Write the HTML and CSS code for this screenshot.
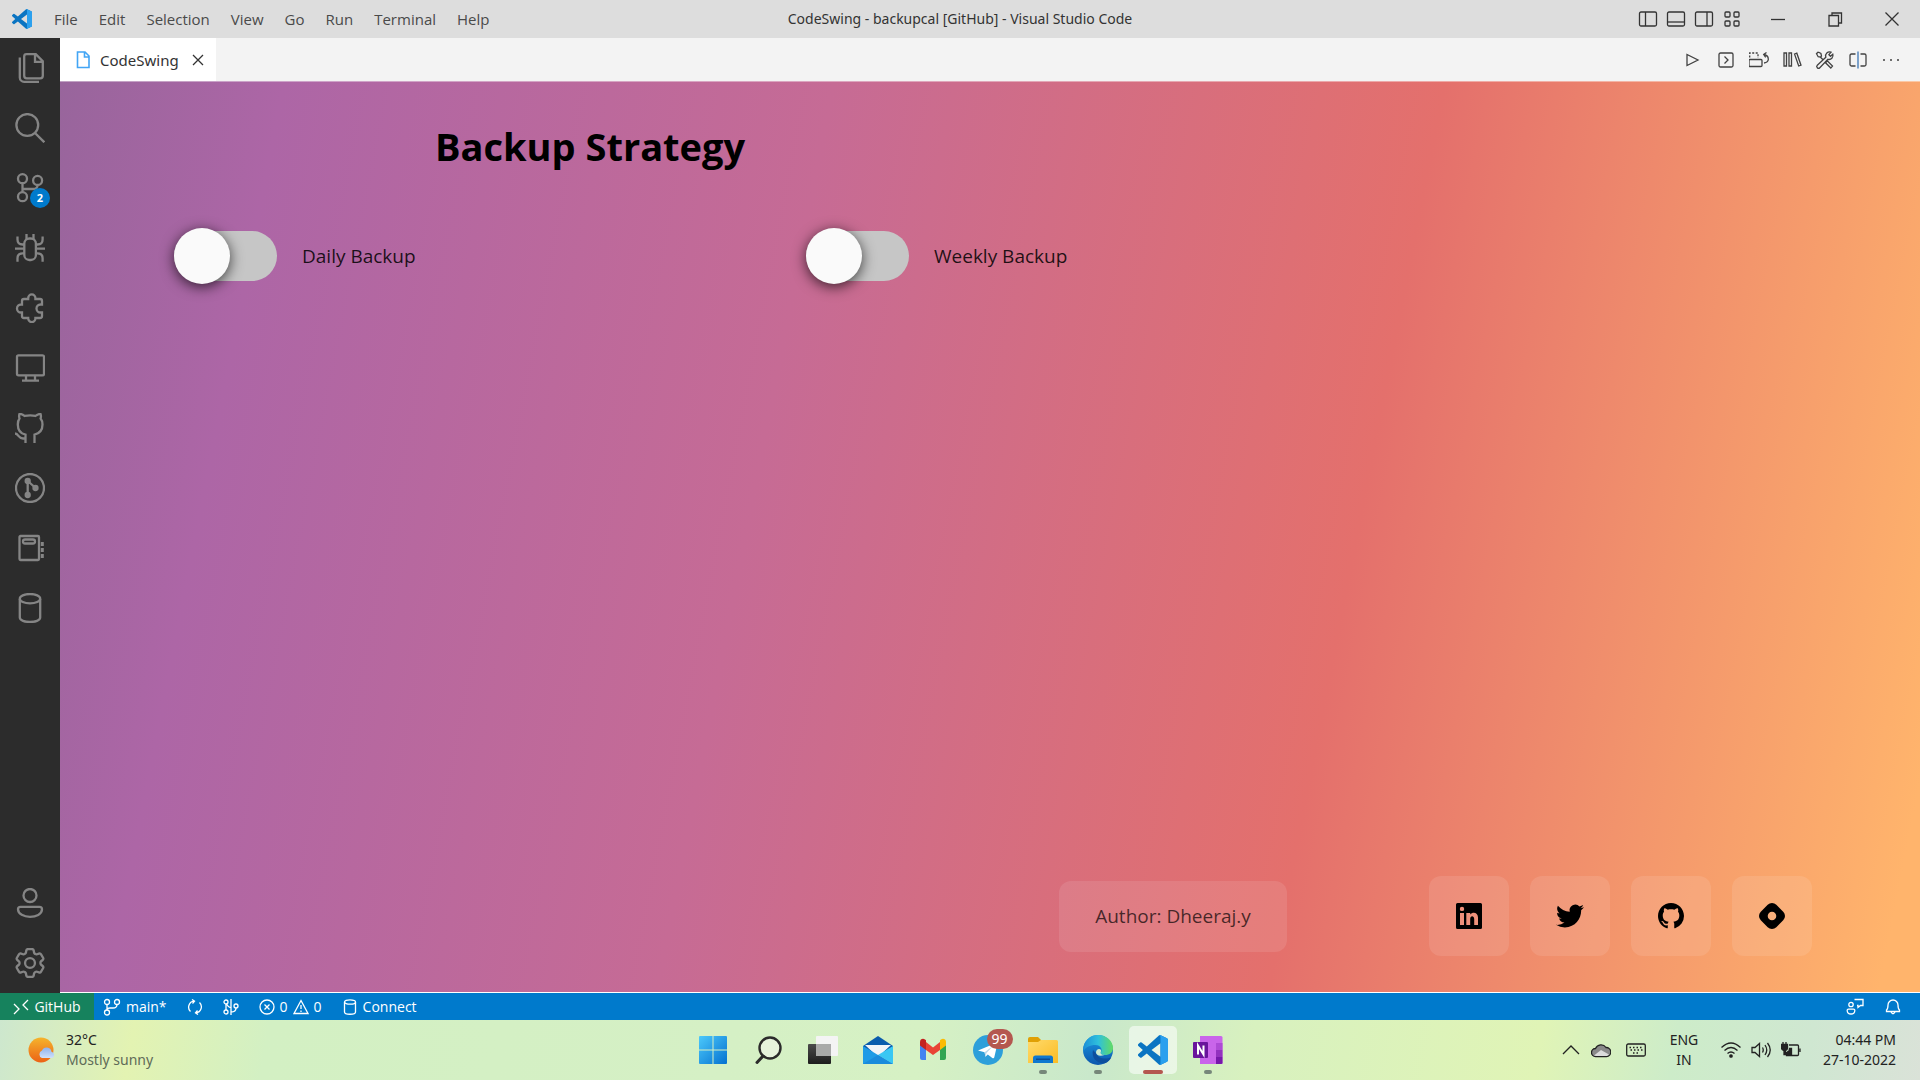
FILE: index.html
```html
<!DOCTYPE html>
<html lang="en">
<head>
<meta charset="utf-8">
<title>CodeSwing - backupcal [GitHub] - Visual Studio Code</title>
<link rel="stylesheet" href="styles.css">
</head>
<body>
<svg class="defs" aria-hidden="true">
  <defs>
    <linearGradient id="g-win" x1="0" y1="0" x2="1" y2="1"><stop offset="0" stop-color="#4cc9fb"/><stop offset="1" stop-color="#0471d0"/></linearGradient>
    <linearGradient id="g-dark" x1="0" y1="0" x2="0" y2="1"><stop offset="0" stop-color="#4b4b4b"/><stop offset="1" stop-color="#1d1d1d"/></linearGradient>
    <linearGradient id="g-edge" x1="0" y1="0" x2="1" y2="0"><stop offset="0" stop-color="#1b8fd8"/><stop offset=".5" stop-color="#2fc0dc"/><stop offset="1" stop-color="#63dc62"/></linearGradient>
    <linearGradient id="g-edge2" x1="0" y1="0" x2="0" y2="1"><stop offset="0" stop-color="#1d9be3"/><stop offset="1" stop-color="#0b56ad"/></linearGradient>
    <linearGradient id="g-sun" x1="0" y1="0" x2="0" y2="1"><stop offset="0" stop-color="#f5b42c"/><stop offset="1" stop-color="#ec6215"/></linearGradient>
    <linearGradient id="g-cloud" x1="0" y1="0" x2="0" y2="1"><stop offset="0" stop-color="#8fb2ee"/><stop offset="1" stop-color="#cfe0fb"/></linearGradient>
    <linearGradient id="g-folder" x1="0" y1="0" x2="1" y2="1"><stop offset="0" stop-color="#ffda6b"/><stop offset="1" stop-color="#fbbc24"/></linearGradient>
    <symbol id="vscode" viewBox="0 0 24 24">
      <path fill="#0a74c2" fill-rule="evenodd" d="M23.15 2.587L18.21.21a1.494 1.494 0 0 0-1.705.29l-9.46 8.63-4.12-3.128a.999.999 0 0 0-1.276.057L.327 7.261A1 1 0 0 0 .326 8.74L3.899 12 .326 15.26a1 1 0 0 0 .001 1.479L1.65 17.94a.999.999 0 0 0 1.276.057l4.12-3.128 9.46 8.63a1.492 1.492 0 0 0 1.704.29l4.942-2.377A1.5 1.5 0 0 0 24 20.06V3.939a1.5 1.5 0 0 0-.85-1.352zm-5.146 14.861L10.826 12l7.178-5.448v10.896z"/>
      <path fill="#2ba0ee" d="M18 .15l5.15 2.437A1.5 1.5 0 0 1 24 3.94v16.12a1.5 1.5 0 0 1-.85 1.352L18.2 23.79q-1 .3-1.7-.29 1.5.5 1.5-1.2V1.7q0-1.600-1.500-1.200.7-.6 1.500-.35z"/>
    </symbol>
  </defs>
</svg>

<header class="titlebar">
  <div class="title-left">
    <svg class="app-logo" viewBox="0 0 24 24"><use href="#vscode"/></svg>
    <nav class="menu">
      <button>File</button><button>Edit</button><button>Selection</button><button>View</button><button>Go</button><button>Run</button><button>Terminal</button><button>Help</button>
    </nav>
  </div>
  <div class="window-title">CodeSwing - backupcal [GitHub] - Visual Studio Code</div>
  <div class="title-right">
    <div class="layout-controls">
      <button aria-label="Toggle primary side bar"><svg class="i20" viewBox="0 0 20 20"><rect x="1.500" y="3" width="17" height="14" rx="1.500"/><path d="M7.500 3v14"/></svg></button>
      <button aria-label="Toggle panel"><svg class="i20" viewBox="0 0 20 20"><rect x="1.500" y="3" width="17" height="14" rx="1.500"/><path d="M1.500 13h17"/></svg></button>
      <button aria-label="Toggle secondary side bar"><svg class="i20" viewBox="0 0 20 20"><rect x="1.500" y="3" width="17" height="14" rx="1.500"/><path d="M13 3v14"/></svg></button>
      <button aria-label="Customize layout"><svg class="i20" viewBox="0 0 20 20"><rect x="3" y="3" width="5" height="5" rx="1"/><rect x="12" y="3" width="5" height="5" rx="1"/><rect x="3" y="12" width="5" height="5" rx="1"/><rect x="12" y="12" width="5" height="5" rx="1"/></svg></button>
    </div>
    <div class="window-controls">
      <button aria-label="Minimize"><svg class="i20" viewBox="0 0 20 20"><path d="M3 10.500h14"/></svg></button>
      <button aria-label="Restore"><svg class="i20" viewBox="0 0 20 20"><path d="M4 6.500h9.500V17H4zM7 6V4h9.500v10H14"/></svg></button>
      <button aria-label="Close"><svg class="i20" viewBox="0 0 20 20"><path d="M3.500 3.500l13 13M16.500 3.500l-13 13"/></svg></button>
    </div>
  </div>
</header>

<div class="workbench">
  <aside class="activity">
    <nav class="activity-group">
      <button aria-label="Explorer"><svg viewBox="0 0 30 30"><path d="M11.500 1.200h9.300l7 7v14.600a2.500 2.500 0 0 1-2.500 2.500H11.700A2.500 2.500 0 0 1 9.200 22.800V3.500a2.300 2.300 0 0 1 2.300-2.300zM20 1.500v7.300h7.500M4.800 4.500v20a4.300 4.300 0 0 0 4.300 4.300H24"/></svg></button>
      <button aria-label="Search"><svg viewBox="0 0 30 30"><circle cx="12.300" cy="12" r="10.900"/><path d="M20 20l9.300 9.300"/></svg></button>
      <button aria-label="Source Control"><svg viewBox="0 0 30 30"><circle cx="7.500" cy="5.700" r="4.500"/><circle cx="22.600" cy="7.400" r="4.500"/><circle cx="7.500" cy="23.700" r="4.500"/><path d="M7.500 10.200v9M22.600 12q0 4-4.500 4H7.500"/></svg><span class="badge">2</span></button>
      <button aria-label="Run and Debug"><svg viewBox="0 0 30 30"><rect x="9.300" y="5.500" width="11.600" height="21.500" rx="5"/><path d="M11.500 6V1M18.500 6V1M9.300 11.500H7.500q-5 0-5-5V3.500M20.900 11.500h1.700q5 0 5-5V3.500M0 15.700h9.500M20.500 15.700H30M9.300 20.300H7.500q-5 0-5 5v3.500M20.900 20.300h1.700q5 0 5 5v3.500"/></svg></button>
      <button aria-label="Extensions"><svg viewBox="0 0 30 30"><path d="M9 6h4.200V5a3.600 3.600 0 0 1 7.200 0v1H25q2 0 2 2v3.500h-1.500a4 4 0 0 0 0 8H27V23q0 2-2 2h-4.600v.5a3.600 3.600 0 0 1-7.200 0V25H9q-2 0-2-2v-3.500H6a4 4 0 0 1 0-8h1V8q0-2 2-2z"/></svg></button>
      <button aria-label="Remote Explorer"><svg viewBox="0 0 30 30"><rect x="2" y="2.300" width="27" height="20" rx="1.500"/><path d="M11 22.500v5M20 22.500v5M7 27.600h17"/></svg></button>
      <button aria-label="GitHub"><svg viewBox="0 0 30 30"><path d="M10.500 30v-8.300C5.500 20.500 2.800 17 2.800 11.500c0-2.500.5-4.500 1.700-6-.5-1.500-.5-3.200 0-4.600 2.200 0 3.800 1 5 2 3.500-.7 8-.7 11 0 1.500-1 3-2 5-2 .6 1.500.6 3 .1 4.600 1.200 1.500 1.900 3.500 1.900 6 0 5.500-3 9-8 10.200V30M0 20.500c4 .5 3 5 8 5h2"/></svg></button>
      <button aria-label="GitLens"><svg viewBox="0 0 30 30"><circle cx="15" cy="15" r="14"/><path d="M12.700 8v14M12.700 8l8 7"/><g class="solid"><circle cx="12.700" cy="8" r="2"/><circle cx="12.700" cy="22" r="2"/><circle cx="20.500" cy="15" r="2"/></g></svg></button>
      <button aria-label="Notebooks"><svg viewBox="0 0 30 30"><rect x="4.500" y="3" width="19.500" height="24" rx="1"/><rect x="8" y="6.500" width="12" height="4" rx="2"/><path class="tick" d="M27.300 9v17" stroke-dasharray="4 2"/></svg></button>
      <button aria-label="Databases"><svg viewBox="0 0 30 30"><ellipse cx="15" cy="5.700" rx="10.200" ry="4.700"/><path d="M4.800 6v18.500c0 6 20.400 6 20.400 0V6"/></svg></button>
    </nav>
    <nav class="activity-group">
      <button aria-label="Accounts"><svg viewBox="0 0 30 30"><circle cx="15" cy="7.500" r="6.500"/><path d="M5.500 18.800h19q2.500 0 2.500 2.500c0 5-6 7.500-12 7.500S3 26 3 21.300q0-2.500 2.500-2.500z"/></svg></button>
      <button aria-label="Manage"><svg class="gear" viewBox="2.300 2.300 19.400 19.400"><path d="M9.594 3.940c.09-.542.56-.94 1.110-.94h2.593c.55 0 1.020.398 1.110.94l.213 1.281c.063.374.313.686.645.87.074.04.147.083.22.127.325.196.72.257 1.075.124l1.217-.456a1.125 1.125 0 0 1 1.370.49l1.296 2.247a1.125 1.125 0 0 1-.26 1.431l-1.003.827c-.293.241-.438.613-.43.992a7.723 7.723 0 0 1 0 .255c-.008.378.137.75.43.991l1.004.827c.424.35.534.955.26 1.430l-1.298 2.247a1.125 1.125 0 0 1-1.369.491l-1.217-.456c-.355-.133-.75-.072-1.076.124a6.470 6.470 0 0 1-.22.128c-.331.183-.581.495-.644.869l-.213 1.281c-.09.543-.56.94-1.110.94h-2.594c-.55 0-1.019-.398-1.110-.94l-.213-1.281c-.062-.374-.312-.686-.644-.87a6.520 6.520 0 0 1-.22-.127c-.325-.196-.72-.257-1.076-.124l-1.217.456a1.125 1.125 0 0 1-1.369-.49l-1.297-2.247a1.125 1.125 0 0 1 .26-1.431l1.004-.827c.292-.24.437-.613.43-.991a6.932 6.932 0 0 1 0-.255c.007-.38-.138-.751-.43-.992l-1.004-.827a1.125 1.125 0 0 1-.26-1.430l1.297-2.247a1.125 1.125 0 0 1 1.370-.491l1.216.456c.356.133.751.072 1.076-.124.072-.044.146-.086.22-.128.332-.183.582-.495.644-.869l.214-1.280Z"/><circle cx="12" cy="12" r="3.200"/></svg></button>
    </nav>
  </aside>

  <main class="editor">
    <div class="tabbar">
      <div class="tab">
        <svg class="tab-file" viewBox="0 0 14 18"><path d="M1.500 1h7.500l4 4v11.500H1.500zM8.500 1v5H13"/></svg>
        <span class="tab-name">CodeSwing</span>
        <button class="tab-close" aria-label="Close tab"><svg viewBox="0 0 12 12"><path d="M1 1l10 10M11 1L1 11"/></svg></button>
      </div>
      <div class="actions">
        <button aria-label="Run"><svg class="i20" viewBox="0 0 20 20"><path d="M4 4.500v11L15 10z"/></svg></button>
        <button aria-label="Open console"><svg class="i20" viewBox="0 0 20 20"><rect x="3" y="3" width="14" height="14" rx="1.500"/><path d="M8.500 6.500L12 10l-3.500 3.500"/></svg></button>
        <button aria-label="Change layout"><svg class="i20" viewBox="0 0 20 20"><rect x="0" y="9.500" width="13" height="7" rx="1"/><path stroke-dasharray="2 1.500" d="M.7 7.500V3H9v5"/><path d="M15 4.500q4.500 1 4.300 5-.3 3-4.300 3.500M17.500 2.500l-2.800 2 2 2.800"/></svg></button>
        <button aria-label="Add library"><svg class="i20" viewBox="0 0 20 20"><path d="M2 3h2.500v13H2zM7 3h2.500v13H7zM12.500 4l2.300-.8 4.200 12-2.300.8z"/></svg></button>
        <button aria-label="Settings tools"><svg class="i20" viewBox="0 0 20 20"><path d="M3.200 2L1.500 3.700l1.700 3 2.300.5 3 3M5.500 7.200L6.500 6l-.6-2.500L3.200 2M11.500 11.500l1-.5 5 5-1.700 2-5-5zM17.800 4.200l-2.300 2.100-1.600-1.600L16 2.200a4 4 0 0 0-5.200 5L2.300 15.200a1.700 1.700 0 0 0 2.500 2.500l8.100-8.400a4 4 0 0 0 4.900-5.100z"/></svg></button>
        <button aria-label="Split editor"><svg class="i20" viewBox="0 0 20 20"><path d="M7.500 4H3.500Q2 4 2 5.500v9Q2 16 3.500 16h4M12.500 4h4Q18 4 18 5.500v9q0 1.500-1.500 1.500h-4"/><path class="blue" d="M10 1.500v17"/></svg></button>
        <button aria-label="More actions"><svg class="i20 dots" viewBox="0 0 20 20"><circle cx="3" cy="10" r="1"/><circle cx="10" cy="10" r="1"/><circle cx="17" cy="10" r="1"/></svg></button>
      </div>
    </div>

    <section class="preview">
      <h1>Backup Strategy</h1>
      <form class="switches">
        <label class="switch"><input type="checkbox"><span>Daily Backup</span></label>
        <label class="switch"><input type="checkbox"><span>Weekly Backup</span></label>
      </form>
      <footer class="credits">
        <p class="author">Author: Dheeraj.y</p>
        <div class="social">
          <a href="#linkedin" aria-label="LinkedIn"><svg viewBox="0 0 26 26"><path fill-rule="evenodd" d="M1.500 0h23A1.500 1.500 0 0 1 26 1.500v23a1.500 1.500 0 0 1-1.500 1.500h-23A1.500 1.500 0 0 1 0 24.500v-23A1.500 1.500 0 0 1 1.500 0zM4 10v12h4V10zM6 3.700a2.200 2.200 0 1 0 0 4.400 2.200 2.200 0 0 0 0-4.400zM10.300 10v12h3.900v-6c0-3.800 4-3.600 4 0v6H22v-7.400c0-5.600-5.600-6-7.800-3V10z"/></svg></a>
          <a href="#twitter" aria-label="Twitter"><svg class="wide" viewBox="0 0 24 24"><path d="M23.953 4.570a10 10 0 01-2.825.775 4.958 4.958 0 002.163-2.723c-.951.555-2.005.959-3.127 1.184a4.920 4.920 0 00-8.384 4.482C7.690 8.095 4.067 6.130 1.640 3.162a4.822 4.822 0 00-.666 2.475c0 1.710.87 3.213 2.188 4.096a4.904 4.904 0 01-2.228-.616v.06a4.923 4.923 0 003.946 4.827 4.996 4.996 0 01-2.212.085 4.936 4.936 0 004.604 3.417 9.867 9.867 0 01-6.102 2.105c-.39 0-.779-.023-1.170-.067a13.995 13.995 0 007.557 2.209c9.053 0 13.998-7.496 13.998-13.985 0-.21 0-.42-.015-.63A9.935 9.935 0 0024 4.590z"/></svg></a>
          <a href="#github" aria-label="GitHub profile"><svg viewBox="0 0 16 16"><path d="M8 0C3.580 0 0 3.580 0 8c0 3.540 2.290 6.530 5.470 7.590.4.070.55-.17.55-.38 0-.19-.01-.82-.01-1.490-2.010.37-2.530-.49-2.690-.94-.09-.23-.48-.94-.82-1.130-.28-.15-.68-.52-.01-.53.63-.01 1.080.58 1.230.82.72 1.210 1.870.87 2.330.66.07-.52.28-.87.51-1.070-1.780-.2-3.640-.89-3.640-3.950 0-.87.31-1.590.82-2.150-.08-.2-.36-1.020.08-2.120 0 0 .67-.21 2.200.82.64-.18 1.320-.27 2-.27s1.360.09 2 .27c1.530-1.040 2.200-.82 2.200-.82.44 1.100.16 1.920.08 2.120.51.56.82 1.270.82 2.150 0 3.070-1.870 3.750-3.650 3.950.29.25.54.73.54 1.480 0 1.070-.01 1.930-.01 2.200 0 .21.15.46.55.38A8.010 8.010 0 0016 8c0-4.420-3.580-8-8-8z"/></svg></a>
          <a href="#hashnode" aria-label="Hashnode"><svg viewBox="0 0 24 24"><path fill-rule="evenodd" d="M22.351 8.019l-6.370-6.370a5.630 5.630 0 0 0-7.962 0l-6.370 6.370a5.630 5.630 0 0 0 0 7.962l6.370 6.370a5.630 5.630 0 0 0 7.962 0l6.370-6.370a5.630 5.630 0 0 0 0-7.962zM12 15.953a3.953 3.953 0 1 1 0-7.906 3.953 3.953 0 0 1 0 7.906z"/></svg></a>
        </div>
      </footer>
    </section>
  </main>
</div>

<div class="statusbar">
  <div class="status-left">
    <button class="remote"><svg class="i16" viewBox="0 0 16 16"><path d="M1 5l5 5-5 5M15 1l-5 5 5 5"/></svg>GitHub</button>
    <button><svg class="i18" viewBox="0 0 18 18"><circle cx="4" cy="4" r="2.500"/><circle cx="4" cy="14.500" r="2.500"/><circle cx="14" cy="4" r="2.500"/><path d="M4 6.500V12M14 6.500q0 3.500-4 3.500H7q-3 0-3 2"/></svg>main*</button>
    <button aria-label="Synchronize"><svg class="i16" viewBox="0 0 16 16"><path d="M3.500 12.500A6 6 0 0 1 7 2.200M12.500 3.500A6 6 0 0 1 9 13.800M5 .5l2.500 1.700L5.500 4.500M11 15.500l-2.500-1.700 2-2.300"/></svg></button>
    <button aria-label="Commit graph"><svg class="i16" viewBox="0 0 16 16"><circle cx="3" cy="3" r="2"/><circle cx="3" cy="13" r="2"/><circle cx="13" cy="7" r="2"/><path d="M3 5v6M8 0v16M8 13q5 0 5-4M3.500 5Q5 8 8 9"/></svg></button>
    <button><svg class="i16" viewBox="0 0 16 16"><circle cx="8" cy="8" r="7"/><path d="M5.500 5.500l5 5M10.500 5.500l-5 5"/></svg>0<svg class="i16" viewBox="0 0 16 16"><path d="M8 1.500L15 14.500H1zM8 6v4M8 11.500v1.500"/></svg>0</button>
    <button><svg class="i16" viewBox="0 0 16 16"><ellipse cx="8" cy="3" rx="5.500" ry="2.200"/><path d="M2.500 3v10c0 3 11 3 11 0V3"/></svg>Connect</button>
  </div>
  <div class="status-right">
    <button aria-label="Feedback"><svg class="i18" viewBox="0 0 18 18"><circle cx="5" cy="6.500" r="2.200"/><path d="M2.500 11.200h5q1.500 0 1.300 1.500-.3 3.300-3.800 3.300t-3.800-3.300q-.2-1.500 1.300-1.500zM8.500 1.500h8.500v6h-2.500L12 9.500v-2h-1"/></svg></button>
    <button aria-label="Notifications"><svg class="i18" viewBox="0 0 18 18"><path d="M2.500 13.500V12q1.500-1 1.500-5a5 5 0 0 1 10 0q0 4 1.500 5v1.500zM7 14q2 3.500 4 0"/></svg></button>
  </div>
</div>

<footer class="taskbar">
  <button class="weather">
    <svg viewBox="0 0 30 28"><circle cx="13" cy="14" r="12.500" fill="url(#g-sun)"/><path fill="url(#g-cloud)" d="M14 22a4 4 0 0 1 0-7.500 5 5 0 0 1 9.500 1.200A3.300 3.300 0 0 1 24 22z"/></svg>
    <span class="weather-text"><span>32°C</span><span class="muted">Mostly sunny</span></span>
  </button>
  <nav class="apps">
    <button aria-label="Start"><svg viewBox="0 0 30 30"><path fill="url(#g-win)" d="M1 2a1 1 0 0 1 1-1h12.500v13.500H1zM15.500 1H28a1 1 0 0 1 1 1v12.500H15.500zM1 15.500h13.500V29H2a1 1 0 0 1-1-1zM15.500 15.500H29V28a1 1 0 0 1-1 1H15.500z"/></svg></button>
    <button aria-label="Search"><svg viewBox="0 0 30 30"><circle cx="17" cy="13" r="10.500" fill="#e6f3dc" stroke="#2b2b2b" stroke-width="2.400"/><path d="M10 21l-6 6.500" stroke="#2b2b2b" stroke-width="3" stroke-linecap="round"/></svg></button>
    <button aria-label="Task view"><svg viewBox="0 0 30 30"><rect x="0" y="9" width="23" height="20" rx="1" fill="url(#g-dark)"/><rect x="8" y="1" width="22" height="20" rx="1" fill="#f4f4f4"/><rect x="8" y="9" width="15" height="12" fill="#a9aaa9"/></svg></button>
    <button aria-label="Mail"><svg viewBox="0 0 30 30"><path fill="#0a5cad" d="M0 11L15 1l15 10v6H0z"/><path fill="#f2f4f8" d="M2 10h26L15 22z"/><path fill="#1f9be6" d="M0 11l15 9 15 9H0z"/><path fill="#39c7f3" d="M30 11v18L15 20z"/><path fill="#1a8bdc" d="M0 29l15-9 15 9z"/></svg></button>
    <button aria-label="Gmail"><svg viewBox="0 0 30 30"><path fill="#4284f0" d="M2 9l6 4v12H4a2 2 0 0 1-2-2z"/><path fill="#33a553" d="M28 9l-6 4v12h4a2 2 0 0 0 2-2z"/><path fill="#e94335" d="M8 7l7 5.500L22 7v8l-7 5-7-5z"/><path fill="#c3221f" d="M2 9V7c0-3 3-4 5-2.500L8 5.300V15l-6-4.500z"/><path fill="#fbbb04" d="M28 9V7c0-3-3-4-5-2.500l-1 .8V15l6-4.500z"/></svg></button>
    <button aria-label="Telegram"><svg viewBox="0 0 30 30"><circle cx="15" cy="15" r="15" fill="#2d9fda"/><path fill="#fff" d="M5 15.500L23 8c1-.3 1.500.2 1.300 1.300l-3 13c-.3 1-1 1.200-2 .6l-4.500-3.300-2.400 2.200-.8-4.600z"/><path fill="#b9d8ea" d="M11.600 17.200L20 11l-6.500 7-.9 4z"/></svg><span class="count">99</span></button>
    <button class="open" aria-label="File Explorer"><svg viewBox="0 0 30 30"><path fill="#e0a005" d="M0 4q0-2 2-2h8l3 3v4H0z"/><path fill="url(#g-folder)" d="M0 7h10l3-2h15.500Q30 5 30 6.500V28H0z"/><path fill="#0f78cf" d="M5 28v-5q0-2.500 2.500-2.500h15Q25 20.500 25 23v5z"/><path fill="#0a4c93" d="M8 23.500h14v1.500H8z"/></svg></button>
    <button class="open" aria-label="Edge"><svg viewBox="0 0 30 30"><circle cx="15" cy="15" r="15" fill="url(#g-edge2)"/><path fill="url(#g-edge)" d="M.5 12C2 4.500 8 0 15 0c9 0 15 6.500 15 13 0 4.500-3.500 7-8 7-3.500 0-5-1.500-4-3 1.500-2.200 0-7-5.500-7C7 10 1.500 12.500.5 17z"/><path fill="#0d4f9e" d="M10 15c-2 8 4 14 12 13.200 3-1 5.500-3.500 6.300-6-4 2.300-13 2.300-15-3.700z"/><path fill="#cdebd0" d="M13 17.500c0-2 1.500-3.500 3-3.500 2 0 2.500 1.800 1.800 3-.8 1.500.5 3 3.700 3-4.500 1.500-8.500.5-8.500-2.500z"/></svg></button>
    <button class="open active" aria-label="Visual Studio Code"><svg viewBox="0 0 24 24"><use href="#vscode"/></svg></button>
    <button class="open" aria-label="OneNote"><svg viewBox="0 0 30 30"><path fill="#c965ea" d="M7 1h21q1.500 0 1.500 1.500V29H7z"/><path fill="#ae4bd5" d="M23 8h6.500v7H23z"/><path fill="#9332bf" d="M23 15h6.500v7H23z"/><path fill="#7719aa" d="M23 22h6.500v5.500q0 1.500-1.500 1.500h-5z"/><rect x="0" y="7" width="15" height="16" rx="1" fill="#6a149c"/><path fill="none" stroke="#fff" stroke-width="2" d="M5 19.500v-9l5.500 9v-9"/></svg></button>
  </nav>
  <div class="tray">
    <button aria-label="Hidden icons"><svg class="i20" viewBox="0 0 20 20"><path d="M2 14l8-8 8 8"/></svg></button>
    <button aria-label="OneDrive"><svg class="i20" viewBox="0 0 20 20"><path fill="#8a8a8a" d="M4.500 16.500a4 4 0 0 1 0-8A6 6 0 0 1 15 7.500a4.500 4.500 0 0 1 .5 9z"/><path fill="#dcdcdc" stroke="none" d="M3 15.500L10 10l8 4.500-2 1.500H5z"/></svg></button>
    <button class="keyboard" aria-label="Touch keyboard"><svg class="i20" viewBox="0 0 20 20"><rect x=".7" y="4" width="18.600" height="12" rx="1.500"/><path stroke-dasharray="1.500 2" d="M3.500 7.500h13M4.500 10h12M7 13h6.500"/></svg></button>
    <button class="lang"><span>ENG</span><span>IN</span></button>
    <button class="system" aria-label="Network, sound and battery">
      <svg class="i20" viewBox="0 0 20 20"><path d="M.5 7.500q9.500-9 19 0M3.500 10.500q6.500-6 13 0M6.500 13.500q3.500-3 7 0"/><circle cx="10" cy="16" r="1.200" fill="#222"/></svg>
      <svg class="i20" viewBox="0 0 20 20"><path d="M1 7.500h3L8.500 3.500v13L4 12.500H1zM11.500 7.500q1.500 2.500 0 5M14 5q3.500 5 0 10M16.500 3q5.500 7 0 14"/></svg>
      <svg class="i20" viewBox="0 0 20 20"><path d="M8 5h8.500q1 0 1 1v8.500q0 1-1 1H5.500V12M19 8.500v3.500"/><path fill="#222" d="M.5 4.500h6V8q0 2-2 2.500v4H3v-4Q.500 10 .5 8zM6.500 14.500h4v-6h-2q0 3-2 3.500zM2 2v2.500M5 2v2.500"/></svg>
    </button>
    <button class="clock"><span>04:44 PM</span><span>27-10-2022</span></button>
  </div>
</footer>
</body>
</html>
```
FILE: styles.css
```css
* { box-sizing: border-box; }

body {
  margin: 0;
  min-height: 100vh;
  display: grid;
  grid-template-rows: 38px 1fr 27px 60px;
  font-family: "Open Sans", "Noto Sans", sans-serif;
  font-size: 15px;
  line-height: 20px;
  color: #222;
}

button {
  display: flex;
  align-items: center;
  justify-content: center;
  margin: 0;
  padding: 0;
  border: 0;
  background: none;
  font: inherit;
  color: inherit;
}

svg { display: block; flex: none; }
.defs { position: absolute; width: 0; height: 0; }

.i20, .i18, .i16 { fill: none; stroke: currentColor; stroke-width: 1.3; }
.i20 { width: 20px; height: 20px; }
.i18 { width: 18px; height: 18px; }
.i16 { width: 16px; height: 16px; }

/* Title bar */
.titlebar {
  display: grid;
  grid-template-columns: 1fr auto 1fr;
  align-items: center;
  background: #ddd;
  color: #333;
}
.title-left { display: flex; align-items: center; padding-left: 12px; gap: 12px; }
.app-logo { width: 20px; height: 20px; }
.menu { display: flex; gap: 1px; }
.menu button { padding: 0 10px; color: #4a4a4a; }
.window-title { font-family: "Noto Sans", sans-serif; font-size: 14px; }
.title-right { display: flex; justify-content: flex-end; align-items: center; }
.layout-controls { display: flex; gap: 8px; padding-right: 7px; }
.window-controls { display: flex; }
.window-controls button { width: 57px; height: 38px; }

/* Workbench */
.workbench { display: grid; grid-template-columns: 60px 1fr; }
.activity {
  display: flex;
  flex-direction: column;
  justify-content: space-between;
  background: #2c2c2c;
}
.activity button { position: relative; width: 60px; height: 60px; }
.activity svg { width: 30px; height: 30px; fill: none; stroke: #858585; stroke-width: 2.3; }
.activity .solid { fill: #858585; }
.activity .tick { stroke-width: 3; }
.activity .gear { stroke-width: 1.5; }
.badge {
  position: absolute;
  left: 30px;
  top: 30px;
  width: 20px;
  height: 20px;
  border-radius: 50%;
  background: #007acc;
  color: #fff;
  font-size: 11px;
  font-weight: 700;
  text-align: center;
}

.editor { display: flex; flex-direction: column; }
.tabbar {
  display: flex;
  justify-content: space-between;
  height: 43px;
  background: #f3f3f3;
}
.tab {
  display: flex;
  align-items: center;
  width: 156px;
  padding: 0 12px 0 16px;
  background: #fff;
  color: #333;
}
.tab-file { width: 14px; height: 18px; margin-right: 10px; fill: none; stroke: #42a5f5; stroke-width: 1.6; }
.tab-name { flex: 1; font-family: "Noto Sans", sans-serif; }
.tab-close svg { width: 12px; height: 12px; fill: none; stroke: #333; stroke-width: 1.3; }
.actions { display: flex; align-items: center; gap: 13px; padding-right: 19px; color: #424242; }
.actions .blue { stroke: #3b76b5; }
.dots { fill: #424242; stroke: none; }

/* Page shown in the preview pane */
.preview {
  flex: 1;
  display: flex;
  flex-direction: column;
  border-top: 1px solid #ffffff66;
  border-bottom: 1px solid #fff;
  background: linear-gradient(101deg, #98659c 0%, #ad66a6 11%, #c66b95 38%, #e4706c 68%, #ffb46c 98%);
  background-origin: border-box;
  color: #000;
}
.preview h1 {
  margin: 37px 0 0 375px;
  font-size: 38px;
  line-height: 54px;
  font-weight: 700;
}
.switches {
  display: grid;
  grid-template-columns: 632px 632px;
  margin: 58px 0 0 114px;
}
.switch { display: flex; align-items: center; gap: 25px; font-size: 19px; color: #000000d9; }
.switch input {
  appearance: none;
  width: 103px;
  height: 50px;
  margin: 0;
  border-radius: 25px;
  background: #c6c6c6;
}
.switch input::before {
  content: "";
  display: block;
  width: 56px;
  height: 56px;
  margin-top: -3px;
  border-radius: 50%;
  background: #fafafa;
  box-shadow: 0 3px 14px #000000b3;
}
.switch input:checked::before { margin-left: 48px; }

.credits {
  display: flex;
  justify-content: flex-end;
  align-items: center;
  gap: 142px;
  margin-top: auto;
  padding: 0 108px 36px 0;
}
.author {
  width: 228px;
  margin: 0;
  border-radius: 12px;
  background: #ffffff1a;
  font-size: 19px;
  line-height: 71px;
  text-align: center;
  color: #000000b3;
}
.social { display: flex; gap: 21px; }
.social a {
  display: grid;
  place-items: center;
  width: 80px;
  height: 80px;
  border-radius: 12px;
  background: #ffffff1a;
  color: #000;
}
.social svg { width: 26px; height: 26px; fill: currentColor; }
.social .wide { width: 28px; height: 28px; }

/* Status bar */
.statusbar { display: flex; justify-content: space-between; background: #007acc; color: #fff; font-size: 14px; }
.status-left, .status-right { display: flex; gap: 20px; }
.status-right { padding-right: 18px; }
.statusbar button { gap: 5px; }
.statusbar .remote { width: 94px; margin-right: -11px; background: #16825d; }

/* Taskbar */
.taskbar {
  display: grid;
  grid-template-columns: 1fr auto 1fr;
  align-items: center;
  background: linear-gradient(100deg, #cde7ce 0%, #e3f3b2 7%, #d3f0c3 14%, #d5f0c5 38%, #d6f1c4 48%, #c9e8cb 57%, #d8f1bf 65%, #e0f4b6 80%, #cdecc9 87%, #cfe7d1 94%, #dae2d8 100%);
  font-family: "Noto Sans", sans-serif;
  font-size: 14px;
}
.weather { justify-self: start; gap: 8px; padding-left: 28px; text-align: left; }
.weather svg { width: 30px; height: 28px; }
.weather-text, .lang, .clock { display: flex; flex-direction: column; }
.muted { color: #5f6b58; }
.apps { display: flex; gap: 7px; }
.apps button { position: relative; width: 48px; height: 48px; border-radius: 5px; }
.apps svg { width: 30px; height: 30px; }
.apps .active { background: #ffffff8c; }
.open::after {
  content: "";
  position: absolute;
  left: 20px;
  bottom: 0;
  width: 8px;
  height: 4px;
  border-radius: 2px;
  background: #76877a;
}
.apps .active::after { left: 14px; width: 20px; background: #b4574f; }
.count {
  position: absolute;
  left: 23px;
  top: 3px;
  width: 26px;
  height: 20px;
  border-radius: 10px;
  background: #b4574f;
  color: #fff;
}
.tray { display: flex; justify-content: flex-end; align-items: center; gap: 10px; padding-right: 24px; }
.keyboard { margin-left: 5px; }
.lang { width: 48px; margin: 0 3px 0 4px; }
.system { gap: 10px; }
.clock { align-items: flex-end; width: 85px; }
```
